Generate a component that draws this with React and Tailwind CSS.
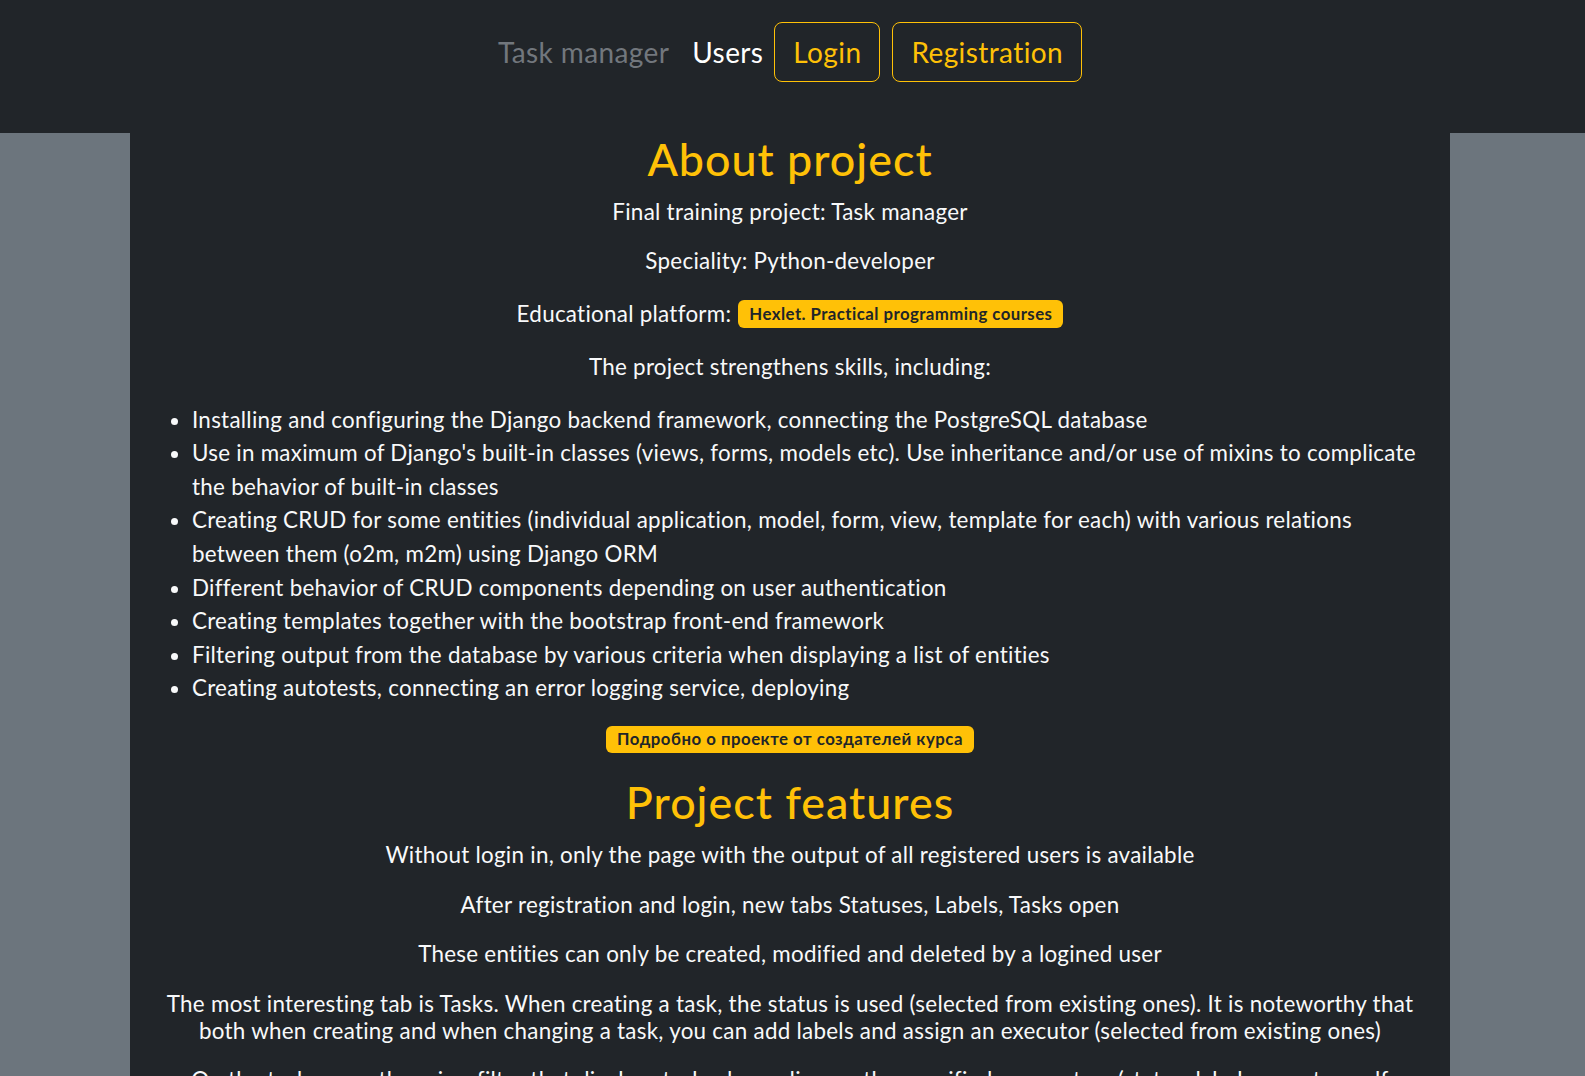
export default function App() {
  const font = "font-['Lato','Noto_Sans',sans-serif]";
  const items = [
    ["Installing and configuring the Django backend framework, connecting the PostgreSQL database"],
    [
      "Use in maximum of Django's built-in classes (views, forms, models etc). Use inheritance and/or use of mixins to complicate",
      "the behavior of built-in classes",
    ],
    [
      "Creating CRUD for some entities (individual application, model, form, view, template for each) with various relations",
      "between them (o2m, m2m) using Django ORM",
    ],
    ["Different behavior of CRUD components depending on user authentication"],
    ["Creating templates together with the bootstrap front-end framework"],
    ["Filtering output from the database by various criteria when displaying a list of entities"],
    ["Creating autotests, connecting an error logging service, deploying"],
  ];
  return (
    <div className={`min-h-screen bg-[#6c757d] ${font} text-[#f8f9fa]`}>
      <header className="h-[133px] bg-[#212529]">
        <nav className="w-[1580px] flex justify-center items-center pt-[22px] h-[60px] box-content tracking-[0.4px]">
          <span className="text-[28px] text-[#72777d] leading-none">Task manager</span>
          <span className="text-[28px] text-white ml-[23px] leading-none">Users</span>
          <button className="ml-[11px] h-[60px] px-[18px] border border-[#ffc107] rounded-lg text-[28px] text-[#ffc107] leading-none tracking-[0.4px]">
            Login
          </button>
          <button className="ml-[12px] h-[60px] px-[18px] border border-[#ffc107] rounded-lg text-[28px] text-[#ffc107] leading-none tracking-[0.4px]">
            Registration
          </button>
        </nav>
      </header>
      <main className="w-[1320px] ml-[130px] bg-[#212529] px-3 pb-10 text-[22.4px] leading-[33.6px] tracking-[0.27px]">
        <h1 className="text-center text-[44.8px] leading-[53.76px] font-medium tracking-[1px] text-[#ffc107] mb-2">About project</h1>
        <p className="text-center mb-4">Final training project: Task manager</p>
        <p className="text-center mb-4">Speciality: Python-developer</p>
        <p className="flex justify-center items-center h-[40px] mb-4">
          <span>Educational platform:</span>
          <span className="ml-[7px] inline-flex items-center h-[28.5px] px-[11px] rounded-md bg-[#ffc107] text-[#212529] text-[16.8px] font-bold leading-none tracking-[0.45px]">
            Hexlet. Practical programming courses
          </span>
        </p>
        <p className="text-center">The project strengthens skills, including:</p>
        <ul className="list-disc pl-[50px] mt-[19px] mb-[17.6px]">
          {items.map((lines, i) => (
            <li key={i}>
              {lines.map((l, j) => (
                <span key={j}>
                  {j > 0 && <br />}
                  {l}
                </span>
              ))}
            </li>
          ))}
        </ul>
        <p className="flex justify-center items-center h-[33.6px]">
          <span className="inline-flex items-center h-[27px] px-[11px] rounded-md bg-[#ffc107] text-[#212529] text-[16.8px] font-bold leading-none tracking-[0.5px]">
            Подробно о проекте от создателей курса
          </span>
        </p>
        <h1 className="mt-[20.4px] text-center text-[44.8px] leading-[53.76px] font-medium tracking-[1px] text-[#ffc107] mb-2">Project features</h1>
        <p className="text-center mb-4">Without login in, only the page with the output of all registered users is available</p>
        <p className="text-center mb-4">After registration and login, new tabs Statuses, Labels, Tasks open</p>
        <p className="text-center mb-4">These entities can only be created, modified and deleted by a logined user</p>
        <p className="text-center mb-4 leading-[27px] pt-[3px] pb-[3px]">
          The most interesting tab is Tasks. When creating a task, the status is used (selected from existing ones). It is noteworthy that
          <br />
          both when creating and when changing a task, you can add labels and assign an executor (selected from existing ones)
        </p>
        <p className="text-center mb-4">
          On the tasks page there is a filter that displays tasks depending on the specified parameters (status, label, executor, self
          <br />
          tasks)
        </p>
      </main>
    </div>
  );
}
